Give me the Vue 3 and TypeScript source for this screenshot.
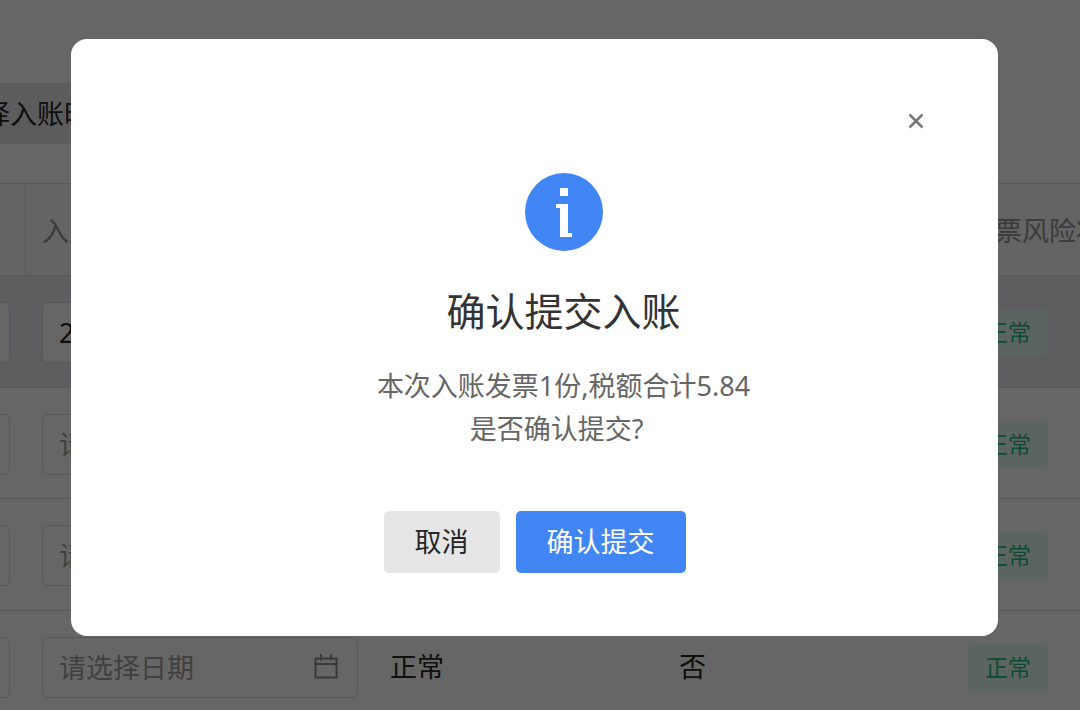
<script setup lang="ts">
import { ref } from 'vue'

interface Invoice {
  id: number
  date: string
  state: string
  flagged: string
  risk: string
  selected: boolean
}

const invoices = ref<Invoice[]>([
  { id: 1, date: '2', state: '正常', flagged: '否', risk: '正常', selected: true },
  { id: 2, date: '', state: '正常', flagged: '否', risk: '正常', selected: false },
  { id: 3, date: '', state: '正常', flagged: '否', risk: '正常', selected: false },
  { id: 4, date: '', state: '正常', flagged: '否', risk: '正常', selected: false },
])
const open = ref(true)
</script>

<template>
  <div class="page">
    <div class="toolbar">
      <button type="button" class="pick">选择入账时间</button>
    </div>
    <div class="grid-wrap">
      <table class="grid">
        <colgroup>
          <col class="c-date" />
          <col class="c-date" />
          <col class="c-text" />
          <col class="c-text" />
          <col />
        </colgroup>
        <thead>
          <tr>
            <th></th>
            <th>入账日期</th>
            <th></th>
            <th></th>
            <th>发票风险状态</th>
          </tr>
        </thead>
        <tbody>
          <tr v-for="row in invoices" :key="row.id" :class="{ selected: row.selected }">
            <td><input class="field" type="text" aria-label="入账" /></td>
            <td>
              <div class="date">
                <input v-model="row.date" class="field" type="text" placeholder="请选择日期" aria-label="入账日期" />
                <svg class="calendar" viewBox="0 0 24 26" aria-hidden="true">
                  <path d="M1.5 5.5h21v19h-21zM1.5 11h21M7 1v6.500M17 1v6.500" />
                </svg>
              </div>
            </td>
            <td>{{ row.state }}</td>
            <td>{{ row.flagged }}</td>
            <td><span class="tag">{{ row.risk }}</span></td>
          </tr>
        </tbody>
      </table>
    </div>

    <div v-if="open" class="overlay">
      <section class="modal" role="dialog" aria-modal="true" aria-labelledby="dialog-title">
        <button type="button" class="close" aria-label="关闭" @click="open = false">
          <svg viewBox="0 0 16 16" aria-hidden="true"><path d="M1.5 1.5l13 13M14.5 1.5l-13 13" /></svg>
        </button>
        <div class="content">
          <svg class="info" viewBox="0 0 78 78" aria-hidden="true">
            <circle cx="39" cy="39" r="39" fill="#4285f4" />
            <path fill="#fff" d="M35 15h8v8h-8zM31 31h12v29h4v4H35V35h-4z" />
          </svg>
          <h1 id="dialog-title">确认提交入账</h1>
          <p>本次入账发票1份,税额合计5.84</p>
          <p class="question">是否确认提交?</p>
        </div>
        <div class="actions">
          <button type="button" class="btn" @click="open = false">取消</button>
          <button type="button" class="btn primary" @click="open = false">确认提交</button>
        </div>
      </section>
    </div>
  </div>
</template>

<style>
body {
  margin: 0;
}
</style>

<style scoped>
.page,
.page * {
  box-sizing: border-box;
}
.page {
  height: 100vh;
  overflow: hidden;
  background: #fff;
  color: #262626;
  font: 27px/40px "Noto Sans", "Noto Sans CJK SC", sans-serif;
}
button,
input {
  font: inherit;
  color: inherit;
}
.toolbar {
  padding-top: 83px;
  margin-left: -76px;
}
.pick {
  display: block;
  height: 61px;
  padding: 0 32px;
  border: 0;
  background: #e6e6e6;
}
.grid-wrap {
  margin: 39px -120px 0 -322px;
}
.grid {
  width: 100%;
  table-layout: fixed;
  border-collapse: separate;
  border-spacing: 0;
  border-top: 1px solid #dcdcdc;
}
.c-date {
  width: 348px;
}
.c-text {
  width: 289px;
}
th {
  height: 92px;
  padding: 3px 16px 0;
  border-right: 1px solid #dcdcdc;
  border-bottom: 1px solid #dcdcdc;
  background: #fafafa;
  color: #909399;
  font-weight: 400;
  text-align: left;
  white-space: nowrap;
}
td {
  height: 112px;
  padding: 2px 16px 0;
  border-bottom: 1px solid #dcdcdc;
}
tr:nth-child(even) td {
  height: 111px;
}
.selected td {
  background: #ebebf2;
}
.date {
  position: relative;
}
.field {
  display: block;
  width: 100%;
  height: 61px;
  padding: 0 56px 0 16px;
  border: 1px solid #dcdcdc;
  border-radius: 5px;
  background: #fff;
}
.field::placeholder {
  color: #a0a0a0;
  opacity: 1;
}
.calendar {
  position: absolute;
  right: 20px;
  top: 16px;
  width: 24px;
  height: 26px;
  fill: none;
  stroke: #909090;
  stroke-width: 2;
  stroke-linejoin: round;
}
.tag {
  display: inline-block;
  padding: 0 17px;
  border-radius: 5px;
  background: #e4faf0;
  color: #1cbe82;
  font-size: 23px;
  line-height: 47px;
  vertical-align: middle;
}
.overlay {
  position: fixed;
  inset: 0;
  display: flex;
  align-items: flex-start;
  padding: 39px 82px 74px 71px;
  background: rgba(0, 0, 0, 0.6);
}
.modal {
  position: relative;
  flex: 1;
  padding: 134px 0 63px;
  border-radius: 16px;
  background: #fff;
}
.close {
  position: absolute;
  top: 66px;
  right: 66px;
  display: grid;
  place-items: center;
  width: 32px;
  height: 32px;
  padding: 0;
  border: 0;
  background: none;
}
.close svg {
  width: 16px;
  height: 16px;
  fill: none;
  stroke: #777;
  stroke-width: 2.5;
}
.content {
  display: flex;
  flex-direction: column;
  align-items: center;
  padding-left: 58px;
}
.info {
  width: 78px;
  height: 78px;
}
h1 {
  margin: 30px 0 23px;
  color: #333;
  font-size: 39px;
  font-weight: 400;
  line-height: 60px;
}
p {
  margin: 0;
  color: #666;
  line-height: 43px;
}
.question {
  padding-right: 14px;
}
.actions {
  display: flex;
  justify-content: center;
  gap: 16px;
  margin-top: 61px;
}
.btn {
  height: 62px;
  padding: 0 31px;
  border: 0;
  border-radius: 5px;
  background: #e6e6e6;
}
.primary {
  background: #4285f4;
  color: #fff;
}
</style>
